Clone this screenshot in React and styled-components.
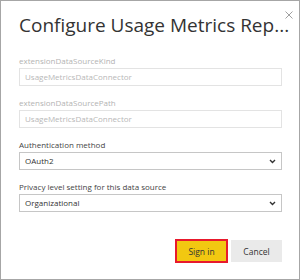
import styled, { createGlobalStyle } from "styled-components";

const GlobalStyle = createGlobalStyle`
  html, body {
    margin: 0;
    padding: 0;
    background: #ffffff;
  }
  body {
    font-family: "Open Sans", "Noto Sans", "Liberation Sans", sans-serif;
  }
`;

const Dialog = styled.div`
  box-sizing: border-box;
  width: 300px;
  height: 280px;
  border: 1px solid #a6a6a6;
  background: #ffffff;
  position: relative;
  padding: 0 17px 0 18px;
  display: flex;
  flex-direction: column;
`;

const Title = styled.h1`
  margin: 0;
  padding-top: 9px;
  height: 44px;
  font-size: 19px;
  font-weight: 400;
  color: #333333;
  line-height: 30px;
  white-space: nowrap;
`;

const CloseButton = styled.button`
  position: absolute;
  top: 8px;
  right: 4px;
  width: 12px;
  height: 12px;
  padding: 0;
  border: none;
  background: transparent;
  display: flex;
  align-items: center;
  justify-content: center;
`;

const Field = styled.div`
  display: flex;
  flex-direction: column;
  margin-bottom: 10px;
`;

const Label = styled.label`
  font-size: 8px;
  line-height: 14px;
  color: ${(p) => (p.$disabled ? "#b3b3b3" : "#444444")};
`;

const Input = styled.div`
  box-sizing: border-box;
  height: 18px;
  border: 1px solid #e3e3e3;
  padding: 0 5px;
  font-size: 8px;
  line-height: 16px;
  color: #b8b8b8;
`;

const Select = styled.div`
  box-sizing: border-box;
  height: 18px;
  border: 1px solid #c6c6c6;
  padding: 0 5px 0 5px;
  font-size: 8px;
  line-height: 16px;
  color: #333333;
  display: flex;
  align-items: center;
  justify-content: space-between;
`;

const Footer = styled.div`
  display: flex;
  justify-content: flex-end;
  gap: 3px;
  margin-top: 17px;
`;

const Button = styled.button`
  box-sizing: border-box;
  height: ${(p) => (p.$primary ? "24px" : "22px")};
  width: ${(p) => (p.$primary ? "53px" : "51px")};
  margin-top: ${(p) => (p.$primary ? "0" : "1px")};
  border: ${(p) => (p.$primary ? "2px solid #e8192c" : "none")};
  background: ${(p) => (p.$primary ? "#f2c811" : "#eaeaea")};
  color: #333333;
  font-family: inherit;
  font-size: 8.5px;
  padding: 0;
`;

function Chevron() {
  return (
    <svg width="7" height="5" viewBox="0 0 7 5">
      <path d="M1 1 L3.5 3.5 L6 1" fill="none" stroke="#333" strokeWidth="1.4" />
    </svg>
  );
}

export default function App() {
  return (
    <>
      <GlobalStyle />
      <Dialog>
        <CloseButton aria-label="Close">
          <svg width="8" height="8" viewBox="0 0 8 8">
            <path d="M0.5 0.5 L7.5 7.5 M7.5 0.5 L0.5 7.5" stroke="#888" strokeWidth="0.8" />
          </svg>
        </CloseButton>
        <Title>Configure Usage Metrics Rep...</Title>

        <Field>
          <Label $disabled>extensionDataSourceKind</Label>
          <Input>UsageMetricsDataConnector</Input>
        </Field>
        <Field>
          <Label $disabled>extensionDataSourcePath</Label>
          <Input>UsageMetricsDataConnector</Input>
        </Field>
        <Field>
          <Label>Authentication method</Label>
          <Select>
            OAuth2
            <Chevron />
          </Select>
        </Field>
        <Field>
          <Label>Privacy level setting for this data source</Label>
          <Select>
            Organizational
            <Chevron />
          </Select>
        </Field>

        <Footer>
          <Button $primary>Sign in</Button>
          <Button>Cancel</Button>
        </Footer>
      </Dialog>
    </>
  );
}
